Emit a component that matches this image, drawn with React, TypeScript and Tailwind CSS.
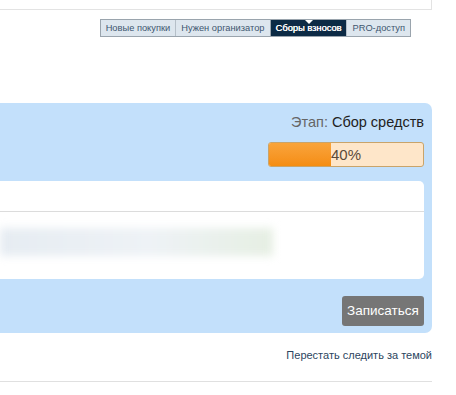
const TABS = ['Новые покупки', 'Нужен организатор', 'Сборы взносов', 'PRO-доступ'];

export default function App() {
  return (
    <div className="w-[456px] h-[395px] bg-white overflow-hidden" style={{ fontFamily: '"Liberation Sans", Arial, sans-serif' }}>
      <div className="w-[432px]">
        {/* top box edge */}
        <div className="h-[10px] border-r border-b border-[#e3e3e3]" />

        {/* tabs */}
        <div className="flex justify-end pr-[21px] mt-[9px]">
          <div className="flex border border-[#9aa4ad] h-[18px] text-[9.3px] leading-[16px]">
            {TABS.map((t, i) => {
              const active = i === 2;
              return (
                <div
                  key={t}
                  className={
                    active
                      ? 'relative bg-[#0c2a45] text-white px-[5px] border-l border-[#9aa4ad] [text-shadow:0.3px_0_0_#fff]'
                      : 'bg-[#dde6ee] text-[#3d5670] px-[5px] ' + (i > 0 ? 'border-l border-[#b5bfc8]' : '')
                  }
                >
                  {active && (
                    <span className="absolute left-1/2 -translate-x-1/2 top-0 w-0 h-0 border-l-[4px] border-r-[4px] border-t-[4px] border-l-transparent border-r-transparent border-t-white" />
                  )}
                  {t}
                </div>
              );
            })}
          </div>
        </div>

        {/* panel */}
        <div className="mt-[66px] bg-[#c3e0fb] rounded-r-[7px] pt-[9px] pb-[7px] pr-[8px]">
          <div className="text-right text-[14.5px] leading-[20px]">
            <span className="text-[#666]">Этап: </span>
            <span className="text-[#222]">Сбор средств</span>
          </div>
          <div className="flex justify-end mt-[10px]">
            <div className="relative w-[156px] h-[25px] rounded-[3px] border border-[#c9a46a] bg-[#fee6c9] overflow-hidden">
              <div className="absolute inset-y-0 left-0 bg-gradient-to-b from-[#f9a43a] to-[#f58d0f]" style={{ width: '40%' }} />
              <div className="relative text-center text-[15px] leading-[23px] text-[#5a4a3a]">40%</div>
            </div>
          </div>
          <div className="mt-[14px] bg-white rounded-r-[5px] h-[98px]">
            <div className="h-[31px] border-b border-[#dcdcdc]" />
            <div className="pt-[16px]">
              <div className="w-[273px] h-[28px] blur-[4px] bg-gradient-to-r from-[#e6ecf2] via-[#eef2f6] via-55% to-[#e6efe3]" />
            </div>
          </div>
          <div className="flex justify-end mt-[17px]">
            <button className="bg-[#767676] text-white text-[13.5px] rounded-[3px] h-[30px] w-[82px]">Записаться</button>
          </div>
        </div>

        <div className="text-right text-[11px] text-[#2c4560] mt-[15px] leading-[14px]">Перестать следить за темой</div>
        <div className="mt-[19px] border-b border-[#e0e0e0]" />
      </div>
    </div>
  );
}
